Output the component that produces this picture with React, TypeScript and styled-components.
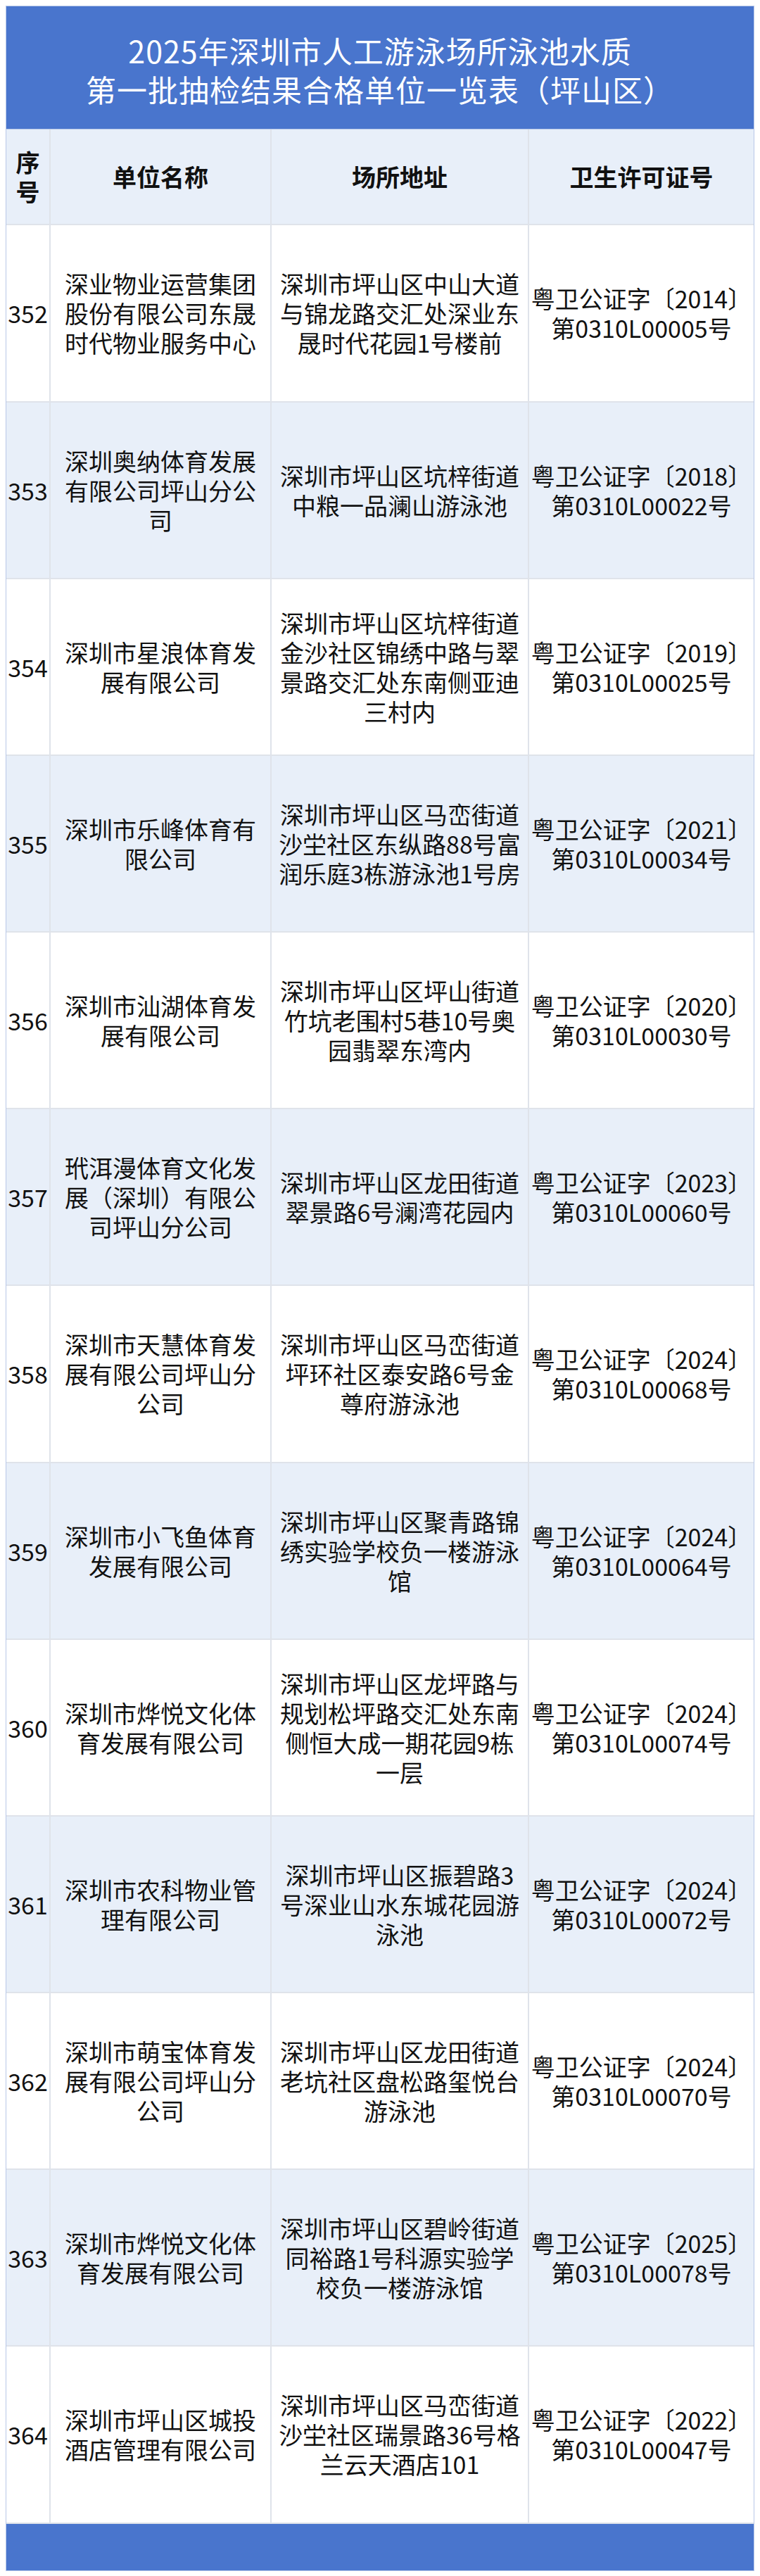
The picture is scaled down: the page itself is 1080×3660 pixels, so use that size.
import React from "react";
import styled, { createGlobalStyle } from "styled-components";

const GlobalStyle = createGlobalStyle`
  html, body { margin: 0; padding: 0; background: #ffffff; }
  body { font-family: "Noto Sans CJK SC", "Noto Sans", sans-serif; }
`;

const BLUE = "#4975cd";
const LIGHT = "#e8eff9";
const LINE = "#dfe3ea";
const COLS = "63px 314px 366px 1fr";

const Page = styled.div`
  width: 1080px;
  padding: 8px;
  box-sizing: border-box;
`;

const Sheet = styled.div`
  width: 1064px;
  border: 1px solid #b8c8e8;
  box-sizing: border-box;
  display: flex;
  flex-direction: column;
`;

const TitleBar = styled.div`
  height: 175px;
  background: ${BLUE};
  display: flex;
  flex-direction: column;
  align-items: center;
  justify-content: center;
  gap: 2px;
  padding-top: 6px;
  box-sizing: border-box;
  border-bottom: 1px solid #b8c8e8;
`;

const TitleLine = styled.div`
  color: #ffffff;
  font-size: 43px;
  line-height: 53px;
  letter-spacing: 1px;
  white-space: nowrap;
  font-family: "Noto Sans CJK SC", sans-serif;
`;

const Row = styled.div<{ $shade: boolean; $h: number }>`
  display: grid;
  grid-template-columns: ${COLS};
  height: ${(p) => p.$h}px;
  background: ${(p) => (p.$shade ? LIGHT : "#ffffff")};
  border-bottom: 2px solid ${LINE};
  box-sizing: border-box;
`;

const Cell = styled.div<{ $head?: boolean; $last?: boolean }>`
  display: flex;
  flex-direction: column;
  align-items: center;
  justify-content: center;
  text-align: center;
  border-right: ${(p) => (p.$last ? "none" : `2px solid ${LINE}`)};
  color: #111111;
  font-size: 34px;
  line-height: 42px;
  font-weight: ${(p) => (p.$head ? 700 : 400)};
  font-family: "Noto Sans CJK SC", sans-serif;
  overflow: hidden;
`;

const Line = styled.span`
  display: block;
  white-space: nowrap;
`;

const Footer = styled.div`
  height: 66px;
  background: ${BLUE};
`;

type Entry = { no: string; name: string[]; addr: string[]; year: string; code: string };

const data: Entry[] = [
  { no: "352", name: ["深业物业运营集团", "股份有限公司东晟", "时代物业服务中心"], addr: ["深圳市坪山区中山大道", "与锦龙路交汇处深业东", "晟时代花园1号楼前"], year: "2014", code: "00005" },
  { no: "353", name: ["深圳奥纳体育发展", "有限公司坪山分公", "司"], addr: ["深圳市坪山区坑梓街道", "中粮一品澜山游泳池"], year: "2018", code: "00022" },
  { no: "354", name: ["深圳市星浪体育发", "展有限公司"], addr: ["深圳市坪山区坑梓街道", "金沙社区锦绣中路与翠", "景路交汇处东南侧亚迪", "三村内"], year: "2019", code: "00025" },
  { no: "355", name: ["深圳市乐峰体育有", "限公司"], addr: ["深圳市坪山区马峦街道", "沙坣社区东纵路88号富", "润乐庭3栋游泳池1号房"], year: "2021", code: "00034" },
  { no: "356", name: ["深圳市汕湖体育发", "展有限公司"], addr: ["深圳市坪山区坪山街道", "竹坑老围村5巷10号奥", "园翡翠东湾内"], year: "2020", code: "00030" },
  { no: "357", name: ["玳洱漫体育文化发", "展（深圳）有限公", "司坪山分公司"], addr: ["深圳市坪山区龙田街道", "翠景路6号澜湾花园内"], year: "2023", code: "00060" },
  { no: "358", name: ["深圳市天慧体育发", "展有限公司坪山分", "公司"], addr: ["深圳市坪山区马峦街道", "坪环社区泰安路6号金", "尊府游泳池"], year: "2024", code: "00068" },
  { no: "359", name: ["深圳市小飞鱼体育", "发展有限公司"], addr: ["深圳市坪山区聚青路锦", "绣实验学校负一楼游泳", "馆"], year: "2024", code: "00064" },
  { no: "360", name: ["深圳市烨悦文化体", "育发展有限公司"], addr: ["深圳市坪山区龙坪路与", "规划松坪路交汇处东南", "侧恒大成一期花园9栋", "一层"], year: "2024", code: "00074" },
  { no: "361", name: ["深圳市农科物业管", "理有限公司"], addr: ["深圳市坪山区振碧路3", "号深业山水东城花园游", "泳池"], year: "2024", code: "00072" },
  { no: "362", name: ["深圳市萌宝体育发", "展有限公司坪山分", "公司"], addr: ["深圳市坪山区龙田街道", "老坑社区盘松路玺悦台", "游泳池"], year: "2024", code: "00070" },
  { no: "363", name: ["深圳市烨悦文化体", "育发展有限公司"], addr: ["深圳市坪山区碧岭街道", "同裕路1号科源实验学", "校负一楼游泳馆"], year: "2025", code: "00078" },
  { no: "364", name: ["深圳市坪山区城投", "酒店管理有限公司"], addr: ["深圳市坪山区马峦街道", "沙坣社区瑞景路36号格", "兰云天酒店101"], year: "2022", code: "00047" },
];

const Lines: React.FC<{ items: string[] }> = ({ items }) => (
  <>
    {items.map((t, i) => (
      <Line key={i}>{t}</Line>
    ))}
  </>
);

export default function App() {
  return (
    <>
      <GlobalStyle />
      <Page>
        <Sheet>
          <TitleBar>
            <TitleLine>2025年深圳市人工游泳场所泳池水质</TitleLine>
            <TitleLine>第一批抽检结果合格单位一览表（坪山区）</TitleLine>
          </TitleBar>
          <Row $shade={true} $h={136}>
            <Cell $head>
              <Lines items={["序", "号"]} />
            </Cell>
            <Cell $head>单位名称</Cell>
            <Cell $head>场所地址</Cell>
            <Cell $head $last>
              卫生许可证号
            </Cell>
          </Row>
          {data.map((d, i) => (
            <Row key={d.no} $shade={i % 2 === 1} $h={i % 6 === 0 ? 252 : 251}>
              <Cell>{d.no}</Cell>
              <Cell>
                <Lines items={d.name} />
              </Cell>
              <Cell>
                <Lines items={d.addr} />
              </Cell>
              <Cell $last>
                <Lines items={[`粤卫公证字〔${d.year}〕`, `第0310L${d.code}号`]} />
              </Cell>
            </Row>
          ))}
          <Footer />
        </Sheet>
      </Page>
    </>
  );
}
